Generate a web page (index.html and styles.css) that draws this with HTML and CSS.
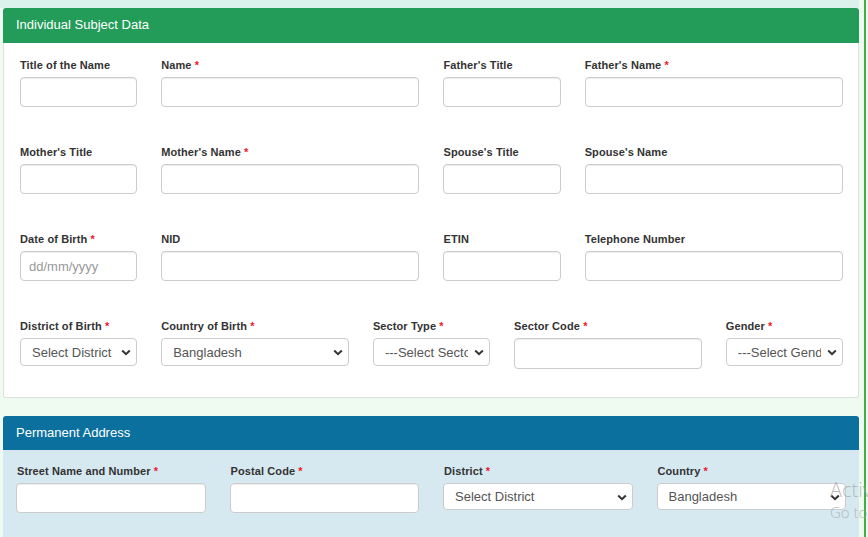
FILE: index.html
```html
<!DOCTYPE html>
<html lang="en">
<head>
<meta charset="utf-8">
<title>Individual Subject Data</title>
<link rel="stylesheet" href="styles.css">
</head>
<body>
<div class="layout">
  <main class="main">
    <div class="top-strip"></div>

    <section class="card card-green">
      <header class="card-head head-green">Individual Subject Data</header>
      <div class="card-body grid12">
        <div class="field span2"><label>Title of the Name</label><input class="ctl" type="text"></div>
        <div class="field span4"><label>Name <span class="req">*</span></label><input class="ctl" type="text"></div>
        <div class="field span2"><label>Father's Title</label><input class="ctl" type="text"></div>
        <div class="field span4"><label>Father's Name <span class="req">*</span></label><input class="ctl" type="text"></div>

        <div class="field span2"><label>Mother's Title</label><input class="ctl" type="text"></div>
        <div class="field span4"><label>Mother's Name <span class="req">*</span></label><input class="ctl" type="text"></div>
        <div class="field span2"><label>Spouse's Title</label><input class="ctl" type="text"></div>
        <div class="field span4"><label>Spouse's Name</label><input class="ctl" type="text"></div>

        <div class="field span2"><label>Date of Birth <span class="req">*</span></label><input class="ctl date" type="text" placeholder="dd/mm/yyyy"></div>
        <div class="field span4"><label>NID</label><input class="ctl" type="text"></div>
        <div class="field span2"><label>ETIN</label><input class="ctl" type="text"></div>
        <div class="field span4"><label>Telephone Number</label><input class="ctl" type="text"></div>

        <div class="field span2"><label>District of Birth <span class="req">*</span></label>
          <div class="sel"><select class="ctl sm"><option>Select District</option></select><svg class="chev" width="10" height="7" viewBox="0 0 10 7"><path d="M1.2 1.5 L5 5.2 L8.8 1.5" fill="none" stroke="#333" stroke-width="2"/></svg></div>
        </div>
        <div class="field span3"><label>Country of Birth <span class="req">*</span></label>
          <div class="sel"><select class="ctl sm"><option>Bangladesh</option></select><svg class="chev" width="10" height="7" viewBox="0 0 10 7"><path d="M1.2 1.5 L5 5.2 L8.8 1.5" fill="none" stroke="#333" stroke-width="2"/></svg></div>
        </div>
        <div class="field span2"><label>Sector Type <span class="req">*</span></label>
          <div class="sel"><select class="ctl sm"><option>---Select Sector Type---</option></select><svg class="chev" width="10" height="7" viewBox="0 0 10 7"><path d="M1.2 1.5 L5 5.2 L8.8 1.5" fill="none" stroke="#333" stroke-width="2"/></svg></div>
        </div>
        <div class="field span3"><label>Sector Code <span class="req">*</span></label><input class="ctl tall" type="text"></div>
        <div class="field span2"><label>Gender <span class="req">*</span></label>
          <div class="sel"><select class="ctl sm"><option>---Select Gender---</option></select><svg class="chev" width="10" height="7" viewBox="0 0 10 7"><path d="M1.2 1.5 L5 5.2 L8.8 1.5" fill="none" stroke="#333" stroke-width="2"/></svg></div>
        </div>
      </div>
    </section>

    <section class="card card-blue">
      <header class="card-head head-blue">Permanent Address</header>
      <div class="card-body body-blue grid4">
        <div class="field"><label>Street Name and Number <span class="req">*</span></label><input class="ctl" type="text"></div>
        <div class="field"><label>Postal Code <span class="req">*</span></label><input class="ctl" type="text"></div>
        <div class="field"><label>District <span class="req">*</span></label>
          <div class="sel"><select class="ctl xs"><option>Select District</option></select><svg class="chev" width="10" height="7" viewBox="0 0 10 7"><path d="M1.2 1.5 L5 5.2 L8.8 1.5" fill="none" stroke="#333" stroke-width="2"/></svg></div>
        </div>
        <div class="field"><label>Country <span class="req">*</span></label>
          <div class="sel"><select class="ctl xs"><option>Bangladesh</option></select><svg class="chev" width="10" height="7" viewBox="0 0 10 7"><path d="M1.2 1.5 L5 5.2 L8.8 1.5" fill="none" stroke="#333" stroke-width="2"/></svg></div>
        </div>
      </div>
    </section>
  </main>
  <aside class="side"></aside>
</div>
<div class="watermark">
  <div class="wm-big">Activ</div>
  <div class="wm-small">Go to</div>
</div>
</body>
</html>
```
FILE: styles.css
```css
* { box-sizing: border-box; }
html, body {
  margin: 0;
  height: 537px;
  overflow: hidden;
}
body {
  background: #effaf0;
  font-family: "Liberation Sans", Arial, sans-serif;
  color: #333;
  position: relative;
}
.layout {
  display: flex;
  height: 537px;
}
.main {
  flex: 0 0 864px;
}
.side {
  flex: 1;
  border-left: 2px solid #3eb04a;
  background: #f3f3f3;
}
.top-strip {
  height: 8px;
  width: 859px;
  background: #dbf1ec;
}
.card {
  margin-left: 3px;
  width: 856px;
  border-radius: 3px;
}
.card-green {
  background: #fff;
  border: 1px solid #dbe2dc;
  border-top: 0;
}
.card-blue {
  margin-top: 18px;
  background: #d6e9f1;
}
.card-head {
  color: #fff;
  font-size: 13px;
  border-radius: 3px 3px 0 0;
}
.head-green {
  background: #239b59;
  height: 35px;
  line-height: 33px;
  margin: 0 -1px;
  padding-left: 13px;
}
.head-blue {
  background: #0b709e;
  height: 34px;
  line-height: 33px;
  padding-left: 13px;
}
.card-body {
  padding: 15px 15px 28px 16px;
}
.grid12 {
  display: grid;
  grid-template-columns: repeat(12, 1fr);
  column-gap: 24px;
  row-gap: 38px;
  align-items: start;
}
.span2 { grid-column: span 2; }
.span3 { grid-column: span 3; }
.span4 { grid-column: span 4; }
.body-blue {
  padding: 14px 13px 30px 13px;
}
.grid4 {
  display: grid;
  grid-template-columns: repeat(4, 1fr);
  column-gap: 24px;
}
.field label {
  display: block;
  font-size: 11px;
  font-weight: bold;
  line-height: 14px;
  margin-bottom: 5px;
  letter-spacing: 0.1px;
  color: #333;
}
.body-blue .field label { padding-left: 1px; }
.req { color: #f2152a; }
.ctl {
  display: block;
  width: 100%;
  height: 30px;
  border: 1px solid #cccccc;
  border-radius: 4px;
  background: #fff;
  box-shadow: inset 0 1px 1px rgba(0,0,0,0.075);
  font-family: "Liberation Sans", Arial, sans-serif;
  font-size: 13px;
  color: #555;
  padding: 0 12px;
  margin: 0;
  outline: none;
}
.ctl.date { padding-left: 8px; }
.ctl::placeholder { color: #999; }
.ctl.tall { height: 31px; }
.sel { position: relative; }
select.ctl {
  -webkit-appearance: none;
  appearance: none;
  padding: 0 21px 0 11px;
  box-shadow: none;
}
select.ctl.sm { height: 28px; }
select.ctl.xs { height: 27px; }
.chev {
  position: absolute;
  right: 6px;
  top: 50%;
  margin-top: -3px;
  pointer-events: none;
}
.watermark {
  position: absolute;
  left: 830px;
  top: 478px;
  white-space: nowrap;
  color: rgba(160,160,160,0.7);
  font-family: "Open Sans", sans-serif;
  font-weight: 300;
}
.wm-big { font-size: 20px; line-height: 24px; }
.wm-small { font-size: 15px; line-height: 20px; }
```
